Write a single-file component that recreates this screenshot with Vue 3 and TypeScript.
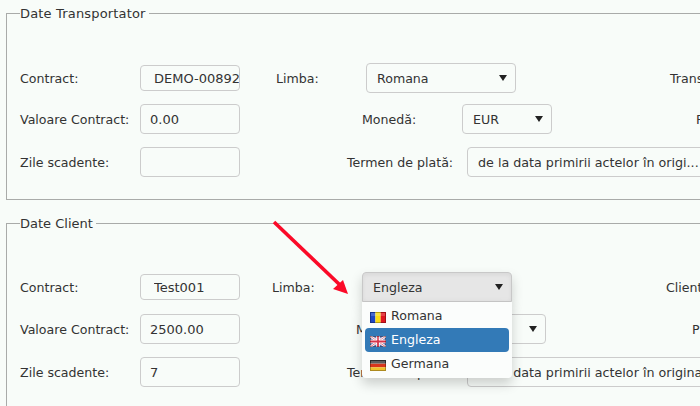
<script setup lang="ts">
type Lang = { code: 'ro' | 'en' | 'de'; name: string };

const languages: Lang[] = [
  { code: 'ro', name: 'Romana' },
  { code: 'en', name: 'Engleza' },
  { code: 'de', name: 'Germana' },
];
</script>

<template>
  <div class="page">
    <fieldset class="box box-top">
      <legend class="legend-wide">Date Transportator</legend>
      <div class="row row-first">
        <label class="lbl lbl-main">Contract:</label>
        <input class="field field-short field-indent" value="DEMO-00892" readonly />
        <label class="lbl limba">Limba:</label>
        <div class="select select-lang"><span>Romana</span><i class="caret"></i></div>
        <label class="lbl extra-a">Transportator:</label>
      </div>
      <div class="row">
        <label class="lbl lbl-main">Valoare Contract:</label>
        <input class="field" value="0.00" readonly />
        <label class="lbl moneda">Monedă:</label>
        <div class="select select-cur"><span>EUR</span><i class="caret"></i></div>
        <label class="lbl extra-b">Plată:</label>
      </div>
      <div class="row">
        <label class="lbl lbl-main">Zile scadente:</label>
        <input class="field" value="" readonly />
        <label class="lbl termen">Termen de plată:</label>
        <div class="select select-term"><span>de la data primirii actelor în origi...</span></div>
      </div>
    </fieldset>

    <fieldset class="box box-client">
      <legend>Date Client</legend>
      <div class="row row-first row-first-client">
        <label class="lbl lbl-main">Contract:</label>
        <input class="field field-short field-indent" value="Test001" readonly />
        <label class="lbl limba limba-client">Limba:</label>
        <div class="dropdown">
          <div class="select select-lang select-open"><span>Engleza</span><i class="caret"></i></div>
          <ul class="menu">
            <li
              v-for="lang in languages"
              :key="lang.code"
              class="menu-item"
              :class="{ active: lang.code === 'en' }"
            >
              <svg class="flag" viewBox="0 0 16 11" width="16" height="11">
                <template v-if="lang.code === 'ro'">
                  <rect width="5.4" height="11" fill="#1f47c4" />
                  <rect x="5.4" width="5.3" height="11" fill="#fbdc16" />
                  <rect x="10.7" width="5.3" height="11" fill="#e0161f" />
                </template>
                <template v-else-if="lang.code === 'en'">
                  <rect width="16" height="11" fill="#5a6aa8" />
                  <path d="M0 0L16 11M16 0L0 11" stroke="#fff" stroke-width="2.4" />
                  <path d="M0 0L16 11M16 0L0 11" stroke="#dc4a5e" stroke-width="0.8" />
                  <path d="M8 0V11M0 5.5H16" stroke="#fff" stroke-width="3.6" />
                  <path d="M8 0V11M0 5.5H16" stroke="#d8344a" stroke-width="1.8" />
                </template>
                <template v-else>
                  <rect width="16" height="3.7" fill="#3a3a3a" />
                  <rect y="3.7" width="16" height="3.6" fill="#d8361c" />
                  <rect y="7.3" width="16" height="3.7" fill="#f0c02c" />
                </template>
                <rect x="0.5" y="0.5" width="15" height="10" fill="none" stroke="#000" stroke-opacity="0.28" />
                <rect x="1" y="1" width="14" height="3" fill="#fff" fill-opacity="0.18" />
              </svg>
              <span class="menu-text">{{ lang.name }}</span>
            </li>
          </ul>
        </div>
        <label class="lbl extra-c">Client:</label>
      </div>
      <div class="row">
        <label class="lbl lbl-main">Valoare Contract:</label>
        <input class="field" value="2500.00" readonly />
        <label class="lbl moneda moneda-client">Monedă:</label>
        <div class="select select-cur"><span>EUR</span><i class="caret"></i></div>
        <label class="lbl extra-d">Plată:</label>
      </div>
      <div class="row">
        <label class="lbl lbl-main">Zile scadente:</label>
        <input class="field" value="7" readonly />
        <label class="lbl termen">Termen de plată:</label>
        <div class="select select-term"><span>de la data primirii actelor în original</span></div>
      </div>
    </fieldset>

    <svg class="pointer" width="700" height="406" viewBox="0 0 700 406">
      <path d="M274 222L340 285" stroke="#fb0a28" stroke-width="3.6" fill="none" />
      <path d="M348 294L343 280L333 289Z" fill="#fb0a28" />
    </svg>
  </div>
</template>

<style scoped>
.page {
  position: relative;
  width: 700px;
  height: 406px;
  overflow: hidden;
  background: #f8fcf9;
  font-family: "DejaVu Sans", sans-serif;
  font-size: 12.6px;
  color: #333;
}

.box {
  width: 900px;
  margin: 0 0 0 6px;
  padding: 0 0 0 13px;
  border: 1px solid #a9aba9;
  box-sizing: border-box;
}

.box-top {
  margin-top: 6px;
  height: 194px;
}

.box-client {
  margin-top: 16px;
  height: 200px;
}

legend {
  padding: 0 3px 0 0;
  font-size: 13px;
  line-height: 15px;
}

.legend-wide {
  letter-spacing: 0.17px;
}

.row {
  display: flex;
  align-items: center;
  height: 30px;
  margin-bottom: 13px;
}

.row-first {
  margin-top: 42px;
  margin-bottom: 11px;
}

.row-first-client {
  margin-top: 41px;
  margin-bottom: 12px;
}

.lbl {
  flex: none;
  white-space: nowrap;
}

.lbl-main {
  width: 120px;
}

.field {
  flex: none;
  width: 100px;
  height: 30px;
  padding: 0 0 0 9px;
  box-sizing: border-box;
  border: 1px solid #ccc;
  border-radius: 4px;
  background: #f8fcf9;
  font-family: inherit;
  font-size: 13px;
  color: inherit;
  outline: none;
}

.field-short {
  height: 26px;
}

.field-indent {
  padding-left: 13px;
}

.limba {
  margin-left: 36px;
  width: 90px;
}

.limba-client {
  margin-left: 32px;
}

.moneda {
  margin-left: 122px;
  width: 100px;
}

.moneda-client {
  margin-left: 116px;
}

.termen {
  margin-left: 107px;
  width: 120px;
}

.select {
  flex: none;
  display: flex;
  align-items: center;
  justify-content: space-between;
  height: 30px;
  padding: 0 8px 0 10px;
  box-sizing: border-box;
  border: 1px solid #ccc;
  border-radius: 4px;
  white-space: nowrap;
}

.select-lang {
  width: 150px;
}

.select-cur {
  width: 90px;
}

.select-term {
  width: 400px;
  font-size: 12.7px;
}

.select-open {
  border-color: #c8c8c8;
  border-radius: 4px 4px 0 0;
  background: #e6e6e6;
  box-shadow: inset 0 2px 4px rgba(0, 0, 0, 0.06);
}

.caret {
  width: 0;
  height: 0;
  border-top: 6px solid #222;
  border-left: 4px solid transparent;
  border-right: 4px solid transparent;
}

.dropdown {
  position: relative;
  flex: none;
  width: 150px;
  z-index: 2;
  box-shadow: 0 6px 12px rgba(0, 0, 0, 0.18);
}

.menu {
  position: absolute;
  top: 30px;
  left: 0;
  width: 150px;
  margin: 0;
  padding: 2px 3px 2px;
  box-sizing: border-box;
  list-style: none;
  background: #fbfdfc;
  border-radius: 0 0 4px 4px;
  box-shadow: 0 6px 12px rgba(0, 0, 0, 0.18);
}

.menu-item {
  display: flex;
  align-items: center;
  gap: 5px;
  height: 24px;
  padding: 0 5px;
  border-radius: 4px;
}

.menu-item.active {
  background: #337ab7;
  color: #fff;
}

.flag {
  flex: none;
  margin-top: 2px;
}

.menu-text {
  margin-bottom: 2px;
}

.extra-a {
  margin-left: 154px;
}

.extra-b {
  margin-left: 144px;
}

.extra-c {
  margin-left: 154px;
}

.extra-d {
  margin-left: 146px;
}

.pointer {
  position: absolute;
  top: 0;
  left: 0;
  z-index: 3;
  pointer-events: none;
}
</style>

<style>
html,
body {
  margin: 0;
  overflow: hidden;
}
</style>
